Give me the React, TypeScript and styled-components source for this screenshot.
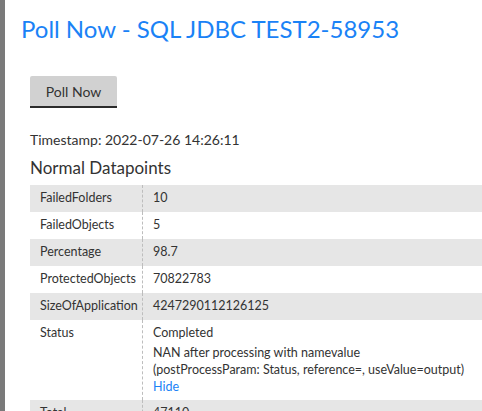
import styled, { createGlobalStyle } from "styled-components";

const GlobalStyle = createGlobalStyle`
  html, body {
    margin: 0;
    padding: 0;
    background: #7a7a7a;
    overflow: hidden;
  }
  body {
    font-family: Lato, "Open Sans", sans-serif;
    color: #333;
  }
`;

const Panel = styled.div`
  margin-left: 5px;
  height: 411px;
  background: #fff;
  overflow: hidden;
`;

const Title = styled.h1`
  margin: 0;
  padding: 14px 0 0 16px;
  height: 46px;
  box-sizing: border-box;
  font-size: 24px;
  font-weight: 400;
  color: #1a82f6;
  white-space: nowrap;
`;

const Body = styled.div`
  padding: 30px 0 0 25px;
`;

const PollButton = styled.button`
  width: 87px;
  height: 32px;
  border: none;
  border-bottom: 2px solid #2b2b2b;
  border-radius: 2px 2px 0 0;
  background: #d1d1d1;
  color: #333;
  font-family: inherit;
  font-size: 14px;
  padding: 0;
  cursor: pointer;
`;

const Timestamp = styled.div`
  margin-top: 23px;
  font-size: 14px;
  line-height: 18px;
`;

const SectionTitle = styled.h2`
  margin: 7px 0 0;
  font-size: 17px;
  font-weight: 400;
  line-height: 24px;
  color: #333;
`;

const Table = styled.div`
  margin-top: 5px;
  width: 480px;
`;

const Row = styled.div<{ $striped: boolean }>`
  display: grid;
  grid-template-columns: 113px 1fr;
  background: ${(p) => (p.$striped ? "#e6e6e6" : "#fff")};
  font-size: 12.5px;
  line-height: 18px;
`;

const Name = styled.div`
  padding: 4px 0 5px 10px;
  border-right: 1px dashed #bdbdbd;
`;

const Value = styled.div`
  padding: 4px 0 5px 10px;
`;

const Note = styled.div`
  margin-top: 2px;
  line-height: 17px;
`;

const Link = styled.a`
  color: #1a82f6;
  text-decoration: none;
  cursor: pointer;
`;

const datapoints = [
  ["FailedFolders", "10"],
  ["FailedObjects", "5"],
  ["Percentage", "98.7"],
  ["ProtectedObjects", "70822783"],
  ["SizeOfApplication", "4247290112126125"],
];

export default function App() {
  return (
    <>
      <GlobalStyle />
      <Panel>
        <Title>Poll Now - SQL JDBC TEST2-58953</Title>
        <Body>
          <PollButton>Poll Now</PollButton>
          <Timestamp>Timestamp: 2022-07-26 14:26:11</Timestamp>
          <SectionTitle>Normal Datapoints</SectionTitle>
          <Table>
            {datapoints.map(([name, value], i) => (
              <Row key={name} $striped={i % 2 === 0}>
                <Name>{name}</Name>
                <Value>{value}</Value>
              </Row>
            ))}
            <Row $striped={false}>
              <Name>Status</Name>
              <Value>
                Completed
                <Note>
                  NAN after processing with namevalue
                  <br />
                  (postProcessParam: Status, reference=, useValue=output)
                  <br />
                  <Link>Hide</Link>
                </Note>
              </Value>
            </Row>
            <Row $striped={true}>
              <Name>Total</Name>
              <Value>47110</Value>
            </Row>
          </Table>
        </Body>
      </Panel>
    </>
  );
}
